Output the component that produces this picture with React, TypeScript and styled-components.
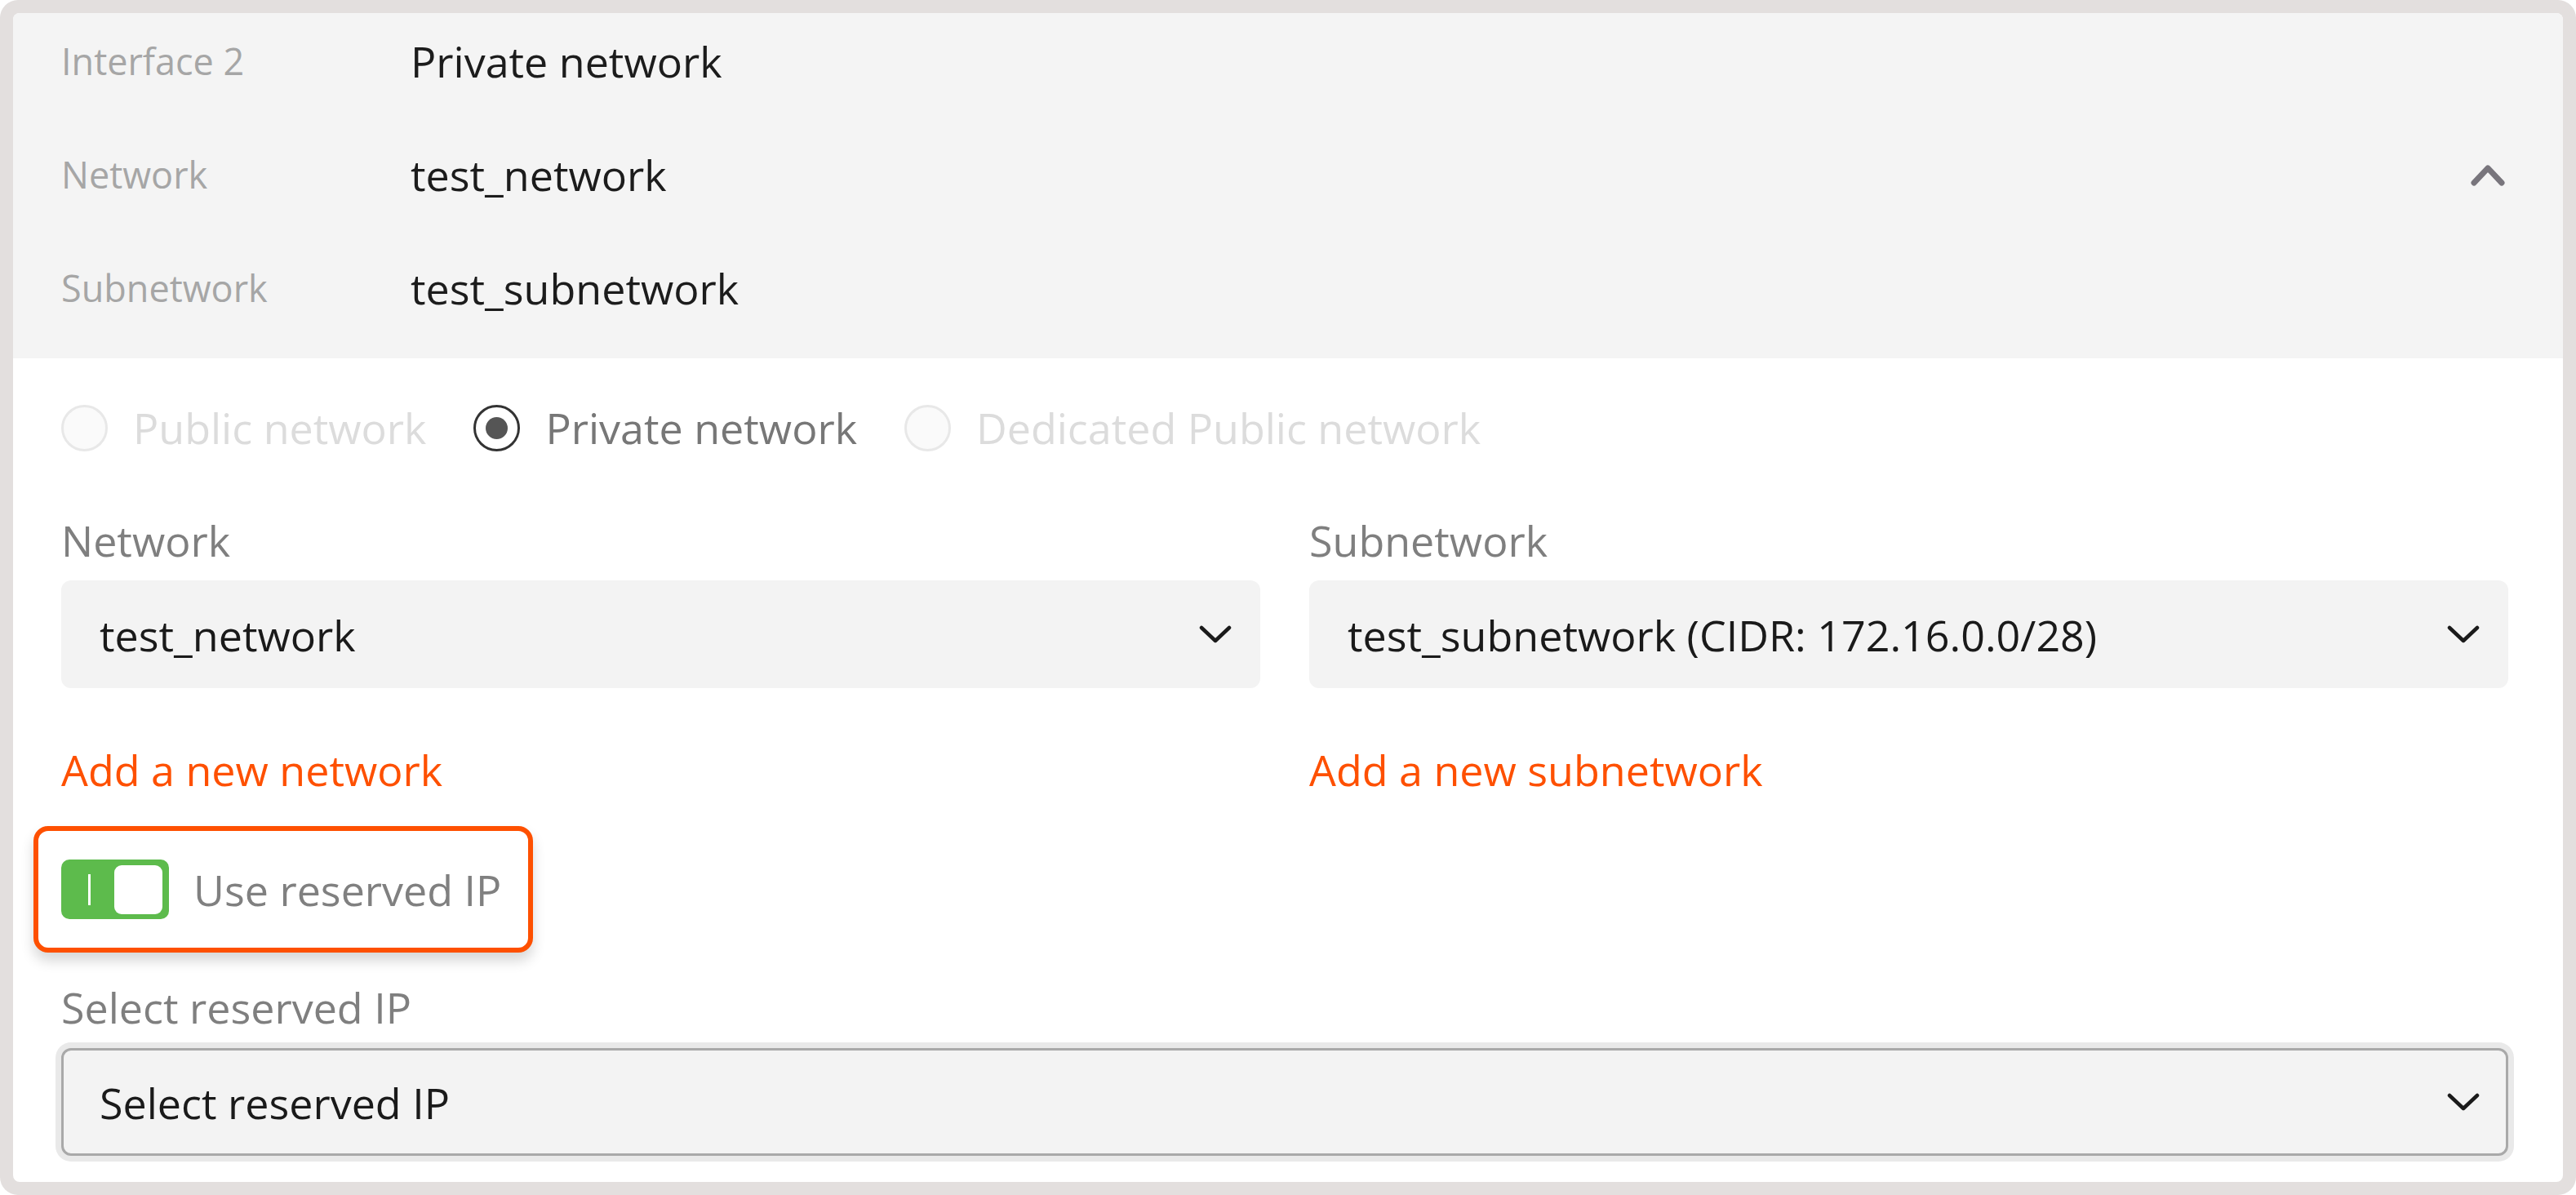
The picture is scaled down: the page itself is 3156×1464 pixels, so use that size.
import React from "react";
import styled, { createGlobalStyle } from "styled-components";

const GlobalStyle = createGlobalStyle`
  html, body { margin: 0; padding: 0; background: #ffffff; }
  body { font-family: "Open Sans", "Noto Sans", sans-serif; -webkit-font-smoothing: antialiased; }
  * { box-sizing: border-box; }
`;

const Frame = styled.div`
  width: 3156px;
  height: 1464px;
  padding: 16px;
  background: #e3dfde;
  border-radius: 22px;
`;

const Panel = styled.div`
  height: 100%;
  background: #ffffff;
  border-radius: 8px;
  overflow: hidden;
  display: flex;
  flex-direction: column;
`;

const Summary = styled.div`
  background: #f4f4f4;
  display: grid;
  grid-template-columns: 428px 1fr auto;
  grid-template-rows: repeat(3, 70px);
  row-gap: 69px;
  align-items: center;
  padding: 24px 67px 51px 59px;
`;

const SummaryLabel = styled.div`
  font-size: 45px;
  line-height: 70px;
  color: #a6a6a6;
  grid-column: 1;
`;

const SummaryValue = styled.div`
  font-size: 52px;
  line-height: 70px;
  color: #1c1c1c;
  grid-column: 2;
`;

const Collapse = styled.div`
  grid-column: 3;
  grid-row: 2;
  display: flex;
  align-items: center;
  margin-right: 4px;
`;

const Body = styled.div`
  display: flex;
  flex-direction: column;
  padding: 55px 67px 0 59px;
`;

const RadioRow = styled.div`
  display: flex;
  align-items: center;
  gap: 58px;
  height: 60px;
`;

const RadioItem = styled.label<{ $disabled?: boolean }>`
  display: flex;
  align-items: center;
  gap: 31px;
  font-size: 52px;
  line-height: 60px;
  color: ${(p) => (p.$disabled ? "#dcdcdc" : "#777777")};
`;

const RadioCircle = styled.span<{ $checked?: boolean; $disabled?: boolean }>`
  width: 57px;
  height: 57px;
  border-radius: 50%;
  border: 3px solid ${(p) => (p.$checked ? "#333333" : "#e8e8e8")};
  background: ${(p) => (p.$disabled ? "#fafafa" : "#ffffff")};
  display: flex;
  align-items: center;
  justify-content: center;
  &::after {
    content: "";
    display: ${(p) => (p.$checked ? "block" : "none")};
    width: 27px;
    height: 27px;
    border-radius: 50%;
    background: #555555;
  }
`;

const Columns = styled.div`
  display: grid;
  grid-template-columns: 1fr 1fr;
  column-gap: 60px;
  margin-top: 78px;
`;

const Field = styled.div`
  display: flex;
  flex-direction: column;
  align-items: flex-start;
`;

const FieldLabel = styled.div<{ $top?: number; $bottom?: number }>`
  font-size: 52px;
  line-height: 60px;
  height: 60px;
  color: #7f7f7f;
  margin-top: ${(p) => p.$top ?? 0}px;
  margin-bottom: ${(p) => p.$bottom ?? 19}px;
`;

const Select = styled.div<{ $focused?: boolean }>`
  align-self: stretch;
  height: 132px;
  display: flex;
  align-items: center;
  justify-content: space-between;
  background: #f3f3f3;
  border-radius: 12px;
  font-size: 52px;
  color: #1a1a1a;
  padding: ${(p) => (p.$focused ? "0 32px 0 44px" : "0 35px 0 47px")};
  border: ${(p) => (p.$focused ? "3px solid #a9a9a9" : "none")};
  box-shadow: ${(p) => (p.$focused ? "0 0 0 7px #e9e9e9" : "none")};
`;

const AddLink = styled.a`
  margin-top: 70px;
  font-size: 52px;
  line-height: 60px;
  color: #fe5000;
  text-decoration: none;
  cursor: pointer;
`;

const Highlight = styled.div`
  align-self: flex-start;
  margin-top: 39px;
  margin-left: -34px;
  display: flex;
  align-items: center;
  gap: 30px;
  height: 155px;
  padding: 0 33px 0 28px;
  border: 6px solid #fe5000;
  border-radius: 18px;
  background: #ffffff;
  box-shadow: 0 10px 16px rgba(0, 0, 0, 0.16);
`;

const Toggle = styled.div`
  width: 132px;
  height: 73px;
  border-radius: 10px;
  background: #5dbb4c;
  display: flex;
  align-items: center;
  justify-content: space-between;
  padding: 0 8px 0 33px;
`;

const ToggleMark = styled.span`
  width: 3px;
  height: 38px;
  background: #ffffff;
`;

const ToggleKnob = styled.span`
  width: 59px;
  height: 60px;
  border-radius: 9px;
  background: #ffffff;
`;

const ToggleLabel = styled.span`
  font-size: 52px;
  line-height: 60px;
  color: #808080;
`;

const ChevronDown = () => (
  <svg width="40" height="22" viewBox="0 0 40 22" fill="none">
    <path d="M3 3 L20 19 L37 3" stroke="#1a1a1a" strokeWidth="4.5" strokeLinecap="round" strokeLinejoin="round" />
  </svg>
);

const ChevronUp = () => (
  <svg width="42" height="28" viewBox="0 0 42 28" fill="none">
    <path d="M4 24 L21 6 L38 24" stroke="#78757c" strokeWidth="7" strokeLinecap="round" strokeLinejoin="round" />
  </svg>
);

const summary = [
  ["Interface 2", "Private network"],
  ["Network", "test_network"],
  ["Subnetwork", "test_subnetwork"],
];

export default function App() {
  return (
    <>
      <GlobalStyle />
      <Frame>
        <Panel>
          <Summary>
            {summary.map(([l, v], i) => (
              <React.Fragment key={l}>
                <SummaryLabel style={{ gridRow: i + 1 }}>{l}</SummaryLabel>
                <SummaryValue style={{ gridRow: i + 1 }}>{v}</SummaryValue>
              </React.Fragment>
            ))}
            <Collapse>
              <ChevronUp />
            </Collapse>
          </Summary>
          <Body>
            <RadioRow>
              <RadioItem $disabled>
                <RadioCircle $disabled />
                Public network
              </RadioItem>
              <RadioItem>
                <RadioCircle $checked />
                Private network
              </RadioItem>
              <RadioItem $disabled>
                <RadioCircle $disabled />
                Dedicated Public network
              </RadioItem>
            </RadioRow>
            <Columns>
              <Field>
                <FieldLabel>Network</FieldLabel>
                <Select>
                  <span>test_network</span>
                  <ChevronDown />
                </Select>
                <AddLink>Add a new network</AddLink>
              </Field>
              <Field>
                <FieldLabel>Subnetwork</FieldLabel>
                <Select>
                  <span>test_subnetwork (CIDR: 172.16.0.0/28)</span>
                  <ChevronDown />
                </Select>
                <AddLink>Add a new subnetwork</AddLink>
              </Field>
            </Columns>
            <Highlight>
              <Toggle>
                <ToggleMark />
                <ToggleKnob />
              </Toggle>
              <ToggleLabel>Use reserved IP</ToggleLabel>
            </Highlight>
            <FieldLabel $top={37} $bottom={20}>Select reserved IP</FieldLabel>
            <Select $focused>
              <span>Select reserved IP</span>
              <ChevronDown />
            </Select>
          </Body>
        </Panel>
      </Frame>
    </>
  );
}
